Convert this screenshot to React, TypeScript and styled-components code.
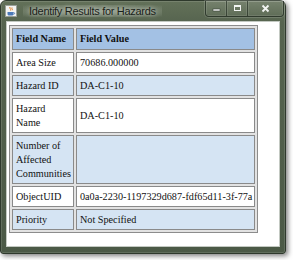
import React from 'react';
import styled, { createGlobalStyle } from 'styled-components';

const Global = createGlobalStyle`
  html, body { margin: 0; padding: 0; background: #ffffff; }
  body { width: 293px; height: 260px; overflow: hidden; }
`;

const Window = styled.div`
  box-sizing: border-box;
  width: 286px;
  height: 254px;
  display: flex;
  flex-direction: column;
  border: 1px solid #2e392c;
  border-radius: 6px 6px 3px 3px;
  background: linear-gradient(180deg, #637159 0%, #56644f 22px, #4b5946 100%);
  box-shadow: 2px 2px 5px rgba(0, 0, 0, 0.5), inset 0 0 0 1px rgba(255, 255, 255, 0.12);
`;

const TitleBar = styled.div`
  height: 20px;
  display: flex;
  align-items: center;
  padding-left: 4px;
  flex-shrink: 0;
`;

const AppIcon = styled.svg`
  width: 12px;
  height: 12px;
  flex-shrink: 0;
`;

const Title = styled.span`
  margin-left: 6px;
  font-family: 'Liberation Sans', Arial, sans-serif;
  font-size: 11px;
  letter-spacing: -0.3px;
  color: #1b1f1a;
  white-space: nowrap;
  padding: 0 6px;
  background: radial-gradient(ellipse at center, rgba(200, 208, 196, 0.5) 0%, rgba(200, 208, 196, 0.22) 60%, rgba(200, 208, 196, 0) 100%);
  text-shadow: 0 0 4px rgba(255, 255, 255, 0.75);
`;

const Controls = styled.div`
  margin-left: auto;
  margin-right: 1px;
  align-self: flex-start;
  display: flex;
  border: 1px solid rgba(30, 40, 30, 0.7);
  border-top: none;
  border-radius: 0 0 4px 4px;
  box-shadow: 0 0 0 1px rgba(255, 255, 255, 0.15);
  overflow: hidden;
`;

const CtrlButton = styled.div<{ $w: number }>`
  width: ${(p) => p.$w}px;
  height: 15px;
  display: flex;
  align-items: center;
  justify-content: center;
  background: linear-gradient(180deg, rgba(255, 255, 255, 0.12), rgba(255, 255, 255, 0.03));
  box-shadow: inset 0 0 0 1px rgba(255, 255, 255, 0.1);
  & + & {
    border-left: 1px solid rgba(30, 40, 30, 0.6);
  }
`;

const ClientFrame = styled.div`
  flex: 1;
  display: flex;
  padding: 0 5px 6px 5px;
`;

const Client = styled.div`
  flex: 1;
  background: #ffffff;
  border: 1px solid #c3c9c2;
  padding: 3px 0 0 2px;
`;

const Table = styled.table`
  width: 249px;
  table-layout: fixed;
  border-collapse: separate;
  border-spacing: 2px;
  border: 1px solid #8c8c8c;
  background: #e2e2e2;
  font-family: 'Liberation Serif', 'Times New Roman', serif;
  font-size: 10.2px;
  color: #111;
`;

const Col = styled.col<{ $w: number }>`
  width: ${(p) => p.$w}px;
`;

const HeadCell = styled.th`
  background: #a3c1e4;
  border: 1px solid #8a8a8a;
  text-align: left;
  font-weight: bold;
  line-height: 14px;
  padding: 3px 3px 3px 3px;
  vertical-align: middle;
`;

const Cell = styled.td<{ $alt: boolean }>`
  background: ${(p) => (p.$alt ? '#d5e4f3' : '#ffffff')};
  border: 1px solid #8a8a8a;
  line-height: 14px;
  padding: 3px 2px 2px 3px;
  vertical-align: middle;
  white-space: normal;
  overflow: hidden;
`;

const ValueCell = styled(Cell)`
  white-space: nowrap;
`;

const rows: [string, string][] = [
  ['Area Size', '70686.000000'],
  ['Hazard ID', 'DA-C1-10'],
  ['Hazard Name', 'DA-C1-10'],
  ['Number of Affected Communities', ''],
  ['ObjectUID', '0a0a-2230-1197329d687-fdf65d11-3f-77a'],
  ['Priority', 'Not Specified'],
];

export default function App() {
  return (
    <>
      <Global />
      <Window>
        <TitleBar>
          <AppIcon viewBox="0 0 12 12">
            <rect x="0.5" y="0.5" width="11" height="11" fill="#f4f4f2" stroke="#9aa09a" />
            <path d="M5 2 C4 3.5 6.5 4 5.5 5.5 M7 2.5 C6.2 3.6 8 4 7.2 5.3" stroke="#e07a20" strokeWidth="1" fill="none" />
            <path d="M2.5 7 H8.5 V9 C8.5 10 7.5 10.5 6.5 10.5 H4.5 C3.5 10.5 2.5 10 2.5 9 Z" fill="#4a78b8" />
            <path d="M8.5 7.5 C10 7.5 10 9.3 8.5 9.3" stroke="#4a78b8" strokeWidth="0.9" fill="none" />
          </AppIcon>
          <Title>Identify Results for Hazards</Title>
          <Controls>
            <CtrlButton $w={20}>
              <svg width="9" height="9" viewBox="0 0 9 9">
                <rect x="1" y="5" width="7" height="2" fill="#f2f4f2" stroke="#2d352c" strokeWidth="0.5" />
              </svg>
            </CtrlButton>
            <CtrlButton $w={20}>
              <svg width="9" height="9" viewBox="0 0 9 9">
                <rect x="1.5" y="1.5" width="6" height="5" fill="none" stroke="#f2f4f2" strokeWidth="1" />
                <rect x="1.5" y="1.5" width="6" height="1.5" fill="#f2f4f2" />
              </svg>
            </CtrlButton>
            <CtrlButton $w={35}>
              <svg width="9" height="9" viewBox="0 0 9 9">
                <path d="M1.5 1.5 L7.5 7.5 M7.5 1.5 L1.5 7.5" stroke="#f2f4f2" strokeWidth="1.8" />
              </svg>
            </CtrlButton>
          </Controls>
        </TitleBar>
        <ClientFrame>
          <Client>
            <Table>
              <colgroup>
                <Col $w={62} />
                <Col $w={179} />
              </colgroup>
              <thead>
                <tr>
                  <HeadCell>Field Name</HeadCell>
                  <HeadCell>Field Value</HeadCell>
                </tr>
              </thead>
              <tbody>
                {rows.map(([name, value], i) => (
                  <tr key={name}>
                    <Cell $alt={i % 2 === 1}>{name}</Cell>
                    <ValueCell $alt={i % 2 === 1}>{value}</ValueCell>
                  </tr>
                ))}
              </tbody>
            </Table>
          </Client>
        </ClientFrame>
      </Window>
    </>
  );
}
